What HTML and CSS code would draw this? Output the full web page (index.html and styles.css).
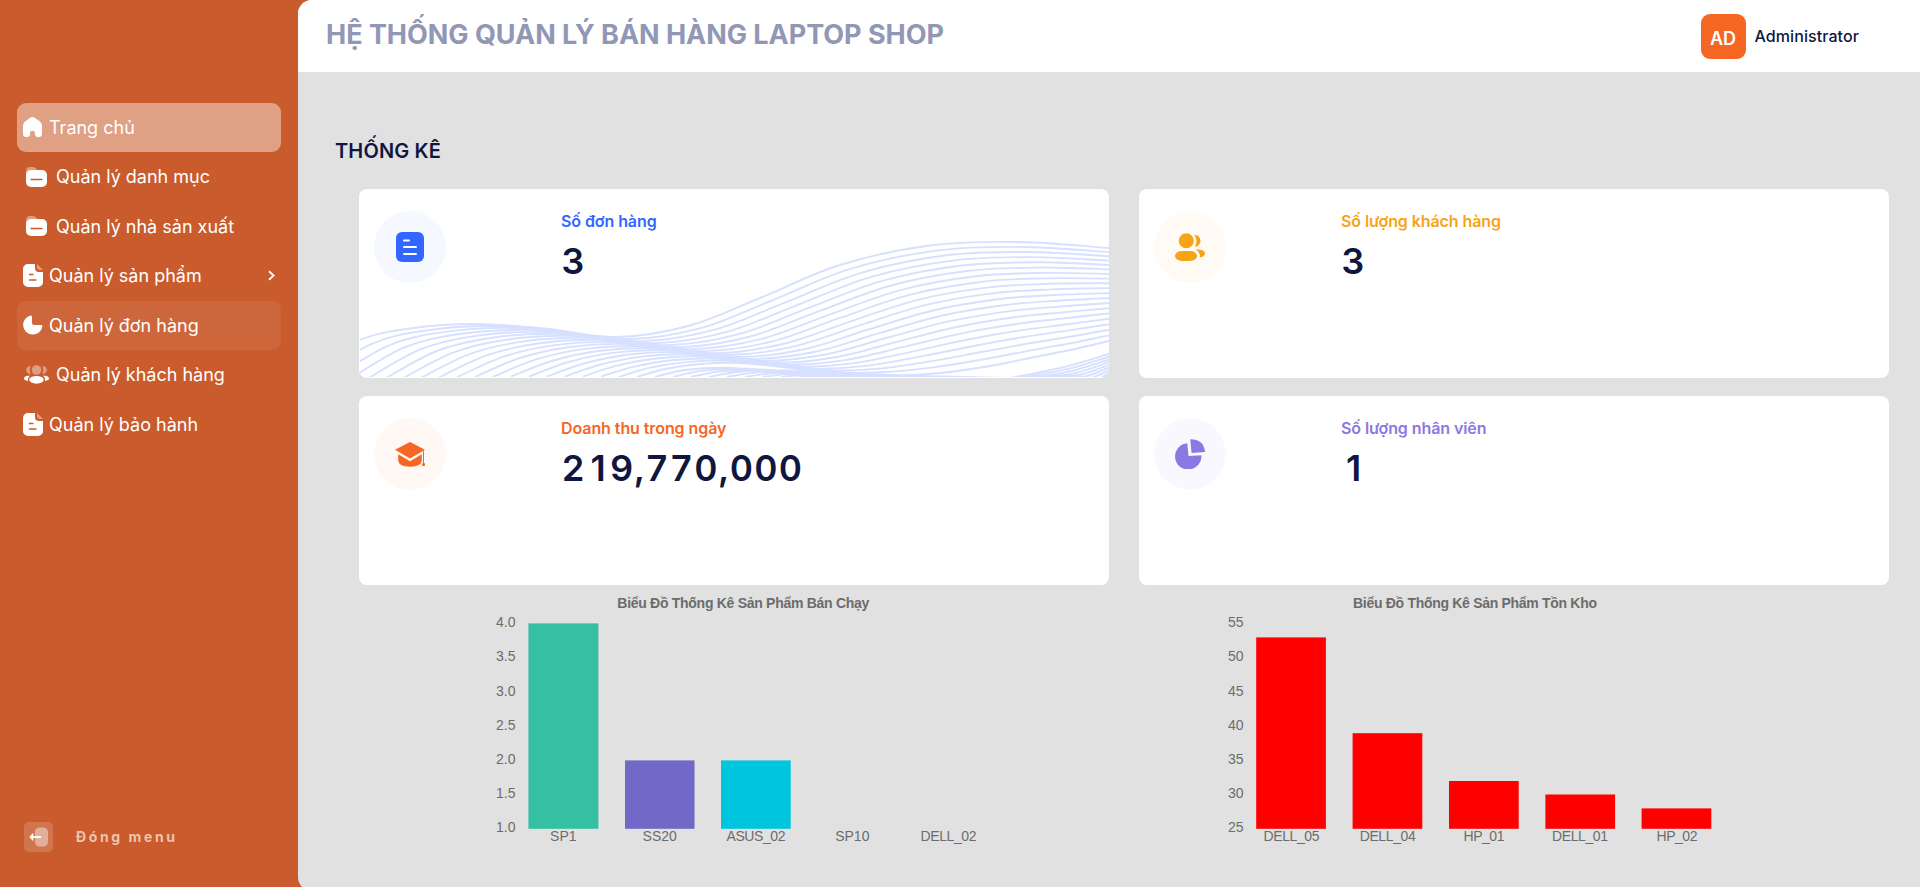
FILE: index.html
```html
<!DOCTYPE html>
<html lang="vi">
<head>
<meta charset="utf-8">
<title>Laptop Shop</title>
<link rel="stylesheet" href="styles.css">
</head>
<body>
<svg width="0" height="0" class="defs">
  <symbol id="folder" viewBox="0 0 21 20">
    <path d="M0 8V4a4 4 0 0 1 4-4h3q2 0 3 1.500l1.500 2V8z" fill="#fff" opacity=".4"/>
    <rect y="3" width="21" height="17" rx="5" fill="#fff"/>
    <path d="M5 12.500h11" stroke="#c95b2d" stroke-width="1.300" stroke-linecap="round"/>
  </symbol>
  <symbol id="file" viewBox="0 0 20 23">
    <path d="M14 0v3q0 3 3 3h3z" fill="#fff" opacity=".4"/>
    <path d="M5 0h7v4q0 4 4 4h4v10a5 5 0 0 1-5 5H5a5 5 0 0 1-5-5V5a5 5 0 0 1 5-5z" fill="#fff"/>
    <path d="M6.500 10.500h3.500M6.500 16h6.500" stroke="#c95b2d" stroke-width="1.400" stroke-linecap="round"/>
  </symbol>
</svg>
<div class="app">
  <aside class="sidebar">
    <nav class="menu">
      <a class="item active"><svg class="icon" width="19" height="20" viewBox="0 0 19 20"><path fill="#fff" d="M7.300.8q2.200-1.600 4.400 0l5 3.500Q19 6 19 8.600V17q0 3-3 3h-1q-3 0-3-3v-1q0-2.300-2.500-2.300T7 16v1q0 3-3 3H3q-3 0-3-3V8.600Q0 6 2.300 4.300z"/></svg><span>Trang chủ</span></a>
      <a class="item wide"><svg class="icon" width="21" height="20"><use href="#folder"/></svg><span>Quản lý danh mục</span></a>
      <a class="item wide"><svg class="icon" width="21" height="20"><use href="#folder"/></svg><span>Quản lý nhà sản xuất</span></a>
      <a class="item"><svg class="icon" width="20" height="23"><use href="#file"/></svg><span>Quản lý sản phẩm</span><svg class="chevron" width="7" height="11" viewBox="0 0 7 11"><path d="M1 1.200l4.600 4.300L1 9.800" fill="none" stroke="#fff" stroke-width="1.900"/></svg></a>
      <a class="item hover"><svg class="icon" width="20" height="20" viewBox="0 0 20 20"><path fill="#fff" d="M7.500.5Q9 .2 9 2v6q0 2 2 2h7q1.800 0 1.400 1.600A9.700 9.700 0 1 1 7.500.5z"/></svg><span>Quản lý đơn hàng</span></a>
      <a class="item people"><svg class="icon" width="25" height="19" viewBox="0 0 25 19" fill="#fff"><g opacity=".4"><circle cx="12.500" cy="5" r="4.800"/><path d="M6.500 1Q2 1.500 2.200 5T6.500 9.300Q5 5 6.500 1zM18.500 1q4.500.5 4.300 4t-4.300 4.300Q20 5 18.500 1z"/></g><ellipse cx="12.500" cy="14.800" rx="7.300" ry="3.900"/><path d="M6.200 10.800Q.5 10 0 13.500q0 2 4 2.400-.6-3 2.200-5.100zM18.800 10.800q5.700-.8 6.200 2.700 0 2-4 2.400.6-3-2.200-5.100z"/></svg><span>Quản lý khách hàng</span></a>
      <a class="item"><svg class="icon" width="20" height="23"><use href="#file"/></svg><span>Quản lý bảo hành</span></a>
    </nav>
    <div class="collapse">
      <svg width="29" height="30" viewBox="0 0 29 30"><rect width="29" height="30" rx="5" fill="#fff" opacity=".16"/><rect x="11" y="5.500" width="13" height="19" rx="4.500" fill="#fff" opacity=".42"/><path d="M17 15H6.500" stroke="#fff" stroke-width="1.800"/><path d="M5.300 15l4-4.200v8.400z" fill="#fff"/></svg>
      <span>Đóng menu</span>
    </div>
  </aside>
  <main class="main">
    <header class="header">
      <h1>HỆ THỐNG QUẢN LÝ BÁN HÀNG LAPTOP SHOP</h1>
      <div class="user"><span class="avatar">AD</span><span class="name">Administrator</span></div>
    </header>
    <h2>THỐNG KÊ</h2>
    <section class="cards">
      <article class="card blue">
        <svg class="waves" id="waves" width="749" height="188" viewBox="360 189 749 188" fill="none" stroke="#d7e1ff" stroke-width="1.900"></svg>
        <div class="badge"><svg width="28" height="30" viewBox="0 0 28 30"><rect width="28" height="30" rx="6" fill="#3366ff"/><path d="M8 8.500h5M8 15h12M8 22h12" stroke="#fff" stroke-width="2" stroke-linecap="round"/></svg></div>
        <div class="stat"><div class="label">Số đơn hàng</div><div class="value">3</div></div>
      </article>
      <article class="card yellow">
        <div class="badge"><svg width="30" height="30" viewBox="0 0 30 30" fill="#f5a418"><circle cx="11.300" cy="8.700" r="7.500"/><path d="M19.200 2.700a6 6 0 1 1 .6 12q3.500-6-.6-12z"/><rect x="0" y="19" width="22" height="10" rx="7" ry="5"/><path d="M20.500 17.500q9-.5 9.500 3.500 0 3.500-5 4.500.2-5.500-4.500-8z"/></svg></div>
        <div class="stat"><div class="label">Số lượng khách hàng</div><div class="value">3</div></div>
      </article>
      <article class="card orange">
        <div class="badge"><svg width="30" height="30" viewBox="0 0 30 30" fill="#f66723"><path d="M15 3L30 10.800 15 19.500 0 10.800z"/><path d="M3.200 15.300L15 22.200l11.800-6.900v6q0 6.400-11.800 6.400T3.200 21.300z"/><path d="M28.500 12v12" stroke="#f66723" stroke-width="1"/><circle cx="28.500" cy="25.500" r="1.600"/></svg></div>
        <div class="stat"><div class="label">Doanh thu trong ngày</div><div class="value">2<span class="one">1</span>9,770,000</div></div>
      </article>
      <article class="card purple">
        <div class="badge"><svg width="30" height="30" viewBox="0 0 30 30" fill="#8c78e3"><path d="M12.300 4.200L13.500 16.900l12.900-.7A13.200 13.200 0 1 1 12.300 4.200z"/><path d="M15.300.3Q29 .5 30 13l-13.500 1z"/></svg></div>
        <div class="stat"><div class="label">Số lượng nhân viên</div><div class="value"><span class="one">1</span></div></div>
      </article>
    </section>
    <section class="charts">
      <svg class="chart" width="750" height="270" viewBox="359 585 750 270">
        <text class="title" x="743.300" y="608" textLength="252">Biểu Đồ Thống Kê Sản Phẩm Bán Chạy</text>
        <g class="ticks"><text x="515.500" y="627">4.0</text><text x="515.500" y="661">3.5</text><text x="515.500" y="696">3.0</text><text x="515.500" y="730">2.5</text><text x="515.500" y="764">2.0</text><text x="515.500" y="798">1.5</text><text x="515.500" y="832">1.0</text></g>
        <rect x="528.400" y="623.400" width="70" height="205.400" fill="#35bfa3"/>
        <rect x="625" y="760.400" width="69.500" height="68.400" fill="#7168c8"/>
        <rect x="721" y="760.400" width="69.700" height="68.400" fill="#00c5df"/>
        <g class="names"><text x="563.300" y="840.500">SP1</text><text x="659.700" y="840.500">SS20</text><text x="756" y="840.500" textLength="59">ASUS_02</text><text x="852.300" y="840.500">SP10</text><text x="948.500" y="840.500" textLength="56">DELL_02</text></g>
      </svg>
      <svg class="chart" width="750" height="270" viewBox="1139 585 750 270">
        <text class="title" x="1475" y="608" textLength="244">Biểu Đồ Thống Kê Sản Phẩm Tồn Kho</text>
        <g class="ticks"><text x="1243.500" y="627">55</text><text x="1243.500" y="661">50</text><text x="1243.500" y="696">45</text><text x="1243.500" y="730">40</text><text x="1243.500" y="764">35</text><text x="1243.500" y="798">30</text><text x="1243.500" y="832">25</text></g>
        <g fill="#f00"><rect x="1256.200" y="637.400" width="69.700" height="191.400"/><rect x="1352.600" y="733.200" width="69.700" height="95.600"/><rect x="1449" y="781" width="69.700" height="47.800"/><rect x="1545.400" y="794.500" width="69.700" height="34.300"/><rect x="1641.600" y="808.400" width="69.700" height="20.400"/></g>
        <g class="names"><text x="1291.500" y="840.500" textLength="56">DELL_05</text><text x="1387.700" y="840.500" textLength="56">DELL_04</text><text x="1484" y="840.500" textLength="41">HP_01</text><text x="1580" y="840.500" textLength="56">DELL_01</text><text x="1677" y="840.500" textLength="41">HP_02</text></g>
      </svg>
    </section>
  </main>
</div>
<script src="waves.js"></script>
</body>
</html>
```
FILE: styles.css
```css
* { box-sizing: border-box; }
body { margin: 0; font-family: Inter, "Liberation Sans", sans-serif; background: #c95b2d; color: #0f1740; }
h1, h2 { margin: 0; }
.defs { display: block; position: absolute; }
.app { display: flex; width: 1921px; height: 887px; overflow: hidden; }
.sidebar { display: flex; flex-direction: column; justify-content: space-between; width: 298px; padding: 103px 17px 35px; background: #c95b2d; }
.menu { display: flex; flex-direction: column; gap: .8px; }
.item { display: flex; align-items: center; height: 48.7px; padding: 0 6px; border-radius: 9px; color: #fff; font-size: 18px; line-height: 24px; white-space: nowrap; gap: 6px; }
.item span { padding-top: 1px; }
.item .icon { width: 20px; flex: none; }
.item.wide { padding-left: 9px; gap: 9px; }
.item.wide .icon { width: 21px; }
.item.people { gap: 7px; padding-left: 7px; }
.item.people .icon { width: 25px; }
.item.active { background: #dfa083; }
.item.active .icon { width: 19px; margin-right: 1px; }
.item.hover { background: #cd673b; }
.chevron { margin-left: auto; }
.collapse { display: flex; align-items: center; gap: 23px; padding-left: 7px; color: #efc3ae; font-size: 14px; font-weight: 700; letter-spacing: 2.6px; }
.collapse span { padding-bottom: 2px; }
.main { width: 1623px; height: 891px; border-right: 1px solid #fff; border-radius: 14px 0 0 14px; background: #e1e1e1; overflow: hidden; }
.header { display: flex; align-items: center; justify-content: space-between; height: 72px; padding: 0 61px 0 28px; background: #fff; }
.header h1 { color: #9197b5; font-size: 27px; line-height: 36px; font-weight: 700; letter-spacing: -.03px; padding-bottom: 2px; white-space: nowrap; }
.user { display: flex; align-items: center; gap: 9px; }
.avatar { display: flex; align-items: center; justify-content: center; width: 45px; height: 45px; padding-top: 4px; border-radius: 9px; background: #f66723; color: #fff; font-size: 18px; font-weight: 600; }
.name { font-size: 16px; font-weight: 500; letter-spacing: .08px; }
.main h2 { padding: 64px 0 0 37px; font-size: 20px; line-height: 30px; font-weight: 600; letter-spacing: .15px; }
.cards { display: grid; grid-template-columns: 750px 750px; grid-auto-rows: 189px; gap: 18px 30px; padding: 23px 0 0 61px; }
.card { position: relative; display: flex; gap: 115px; padding: 22px 15px; border-radius: 8px; background: #fff; overflow: hidden; }
.waves { position: absolute; left: 1px; top: 0; }
.badge { position: relative; display: flex; align-items: center; justify-content: center; width: 72px; height: 72px; border-radius: 50%; }
.stat { position: relative; }
.label { font-size: 16px; line-height: 20px; font-weight: 600; letter-spacing: -.08px; }
.value { margin-top: 8px; font-size: 36px; line-height: 44px; font-weight: 600; letter-spacing: 1.2px; font-variant-numeric: tabular-nums; padding-left: .5px; }
.one { display: inline-block; width: 24px; text-align: center; letter-spacing: 0; font-variant-numeric: normal; }
.blue .badge { background: #f5f8ff; }
.blue .label { color: #3366ff; }
.yellow .badge { background: #fffbf4; }
.yellow .label { color: #f5a418; }
.orange .badge { background: #fff8f4; }
.orange .label { color: #f66723; }
.purple .badge { background: #f9f8ff; }
.purple .label { color: #8c78e3; }
.charts { display: grid; grid-template-columns: 750px 750px; gap: 30px; padding-left: 61px; }
.chart { display: block; font-family: "Liberation Sans", Arial, sans-serif; fill: #6c6c6c; font-size: 14px; }
.chart .title { font-weight: 700; text-anchor: middle; }
.ticks { text-anchor: end; }
.names { text-anchor: middle; }
```
FILE: waves.js
```js
// Contour lines blended between three guide curves.
const guides = [
  [[295,381],[355,342],[410,328.5],[475,324],[545,328.500],[617,337],[690,325.5],[760,298],[840,265],[930,245.5],[1020,242],[1109,248]],
  [[475,377],[520,358],[570,347],[625,344],[680,350],[740,357],[805,349],[870,329],[935,310],[1000,299],[1055,295],[1109,293]],
  [[637,377],[665,369],[700,364],[740,363],[790,368],[840,374],[890,375.5],[940,373],[990,366],[1035,357],[1075,349],[1109,341]]
];
function smooth(p) {
  let d = `M${p[0]}`;
  for (let i = 0; i < p.length - 1; i++) {
    const a = p[i - 1] || p[i], b = p[i], c = p[i + 1], e = p[i + 2] || c;
    d += `C${b[0] + (c[0] - a[0]) / 6},${b[1] + (c[1] - a[1]) / 6} ${c[0] - (e[0] - b[0]) / 6},${c[1] - (e[1] - b[1]) / 6} ${c}`;
  }
  return d;
}
let d = "";
for (let k = 0; k < 20; k++) {
  const w = [(k - 10) * (k - 19) / 190, -k * (k - 19) / 90, k * (k - 10) / 171];
  d += smooth(guides[0].map((_, i) => [0, 1].map(j => w[0] * guides[0][i][j] + w[1] * guides[1][i][j] + w[2] * guides[2][i][j])));
}
for (let k = 0; k < 11; k++) {
  const x = 655 + k * 18;
  d += smooth([[x, 377], [x + 30, 370 + k * .6], [x + 75, 368 + k * .8], [x + 130, 374 + k * .3], [x + 180, 378]]);
}
for (let k = 0; k < 9; k++) {
  d += smooth([[1010 + k * 9, 378], [1060 + k * 5, 368 + k * 1.7], [1109, 354 + k * 2.7]]);
}
const path = document.createElementNS("http://www.w3.org/2000/svg", "path");
path.setAttribute("d", d);
document.getElementById("waves").append(path);
```
